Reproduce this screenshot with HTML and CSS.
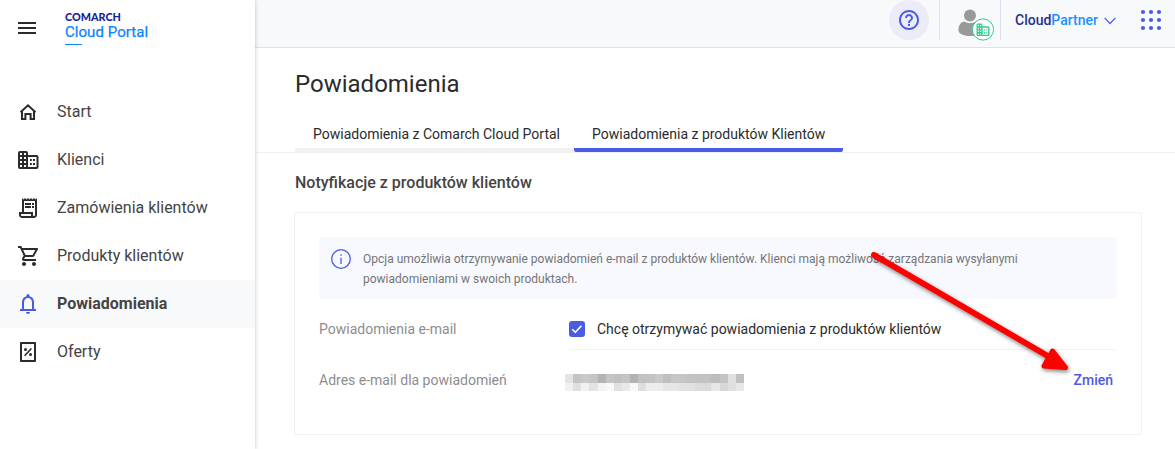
FILE: index.html
```
<!DOCTYPE html>
<html lang="pl">
<head>
    <meta charset="UTF-8">
    <meta name="viewport" content="width=device-width, initial-scale=1.0">
    <title>Comarch Cloud Portal - Powiadomienia</title>
    <link rel="stylesheet" href="styles.css">
</head>
<body>

<aside class="sidebar">
    <div class="brand">
        <svg class="icon" viewBox="0 0 24 24"><path d="M3 18h18v-2H3v2zm0-5h18v-2H3v2zm0-7v2h18V6H3z"/></svg>
        <div class="logo">
            <span class="logo-top">COMARCH</span>
            <span class="logo-name">Cloud Portal</span>
            <span class="logo-line"></span>
        </div>
    </div>

    <nav class="menu">
        <a class="menu-item">
            <svg class="icon stroke" viewBox="0 0 24 24"><path d="M4.500 12.300L12 5.300l7.500 7M6 11v8h3.400v-5h1.600M18 11v8h-3.400v-5H11"/></svg>
            <span>Start</span>
        </a>
        <a class="menu-item">
            <svg class="icon" viewBox="0 0 24 24"><path fill-rule="evenodd" d="M4 3h6a2 2 0 0 1 2 2v2h8.500a2 2 0 0 1 2 2v10a2 2 0 0 1-2 2H4a2 2 0 0 1-2-2V5a2 2 0 0 1 2-2zM4 5v2h2V5zm4 0v2h2V5zM4 9v2h2V9zm4 0v2h2V9zm-4 4v2h2v-2zm4 0v2h2v-2zm-4 4v2h2v-2zm4 0v2h2v-2zm4-8v10h8.500V9zM14 11h1.800v2H14zM17 11h2v2h-2zM14 15h1.800v2H14zM17 15h2v2h-2z"/></svg>
            <span>Klienci</span>
        </a>
        <a class="menu-item">
            <svg class="icon" viewBox="0 0 24 24"><path d="M19.500 3.500L18 2l-1.500 1.500L15 2l-1.500 1.500L12 2l-1.500 1.500L9 2 7.500 3.500 6 2v14H3v3c0 1.660 1.340 3 3 3h12c1.660 0 3-1.340 3-3V2l-1.500 1.500zM15 20H6c-.55 0-1-.45-1-1v-1h10v2zm4-1c0 .55-.45 1-1 1s-1-.45-1-1v-3H8V5h11v14z"/><path d="M9 7h6v2H9zM16 7h2v2h-2zM9 10h6v2H9zM16 10h2v2h-2z"/></svg>
            <span>Zamówienia klientów</span>
        </a>
        <a class="menu-item">
            <svg class="icon" viewBox="0 0 24 24"><path d="M15.550 13c.75 0 1.410-.41 1.750-1.030l3.580-6.490c.37-.66-.11-1.480-.87-1.480H5.210l-.94-2H1v2h2l3.600 7.590-1.350 2.440C4.520 15.370 5.480 17 7 17h12v-2H7l1.100-2h7.450zM6.160 6h12.150l-2.760 5H8.530L6.160 6zM7 18c-1.100 0-1.990.9-1.990 2S5.900 22 7 22s2-.9 2-2-.9-2-2-2zm10 0c-1.100 0-1.990.9-1.990 2s.89 2 1.990 2 2-.9 2-2-.9-2-2-2z" transform="translate(1 0)"/></svg>
            <span>Produkty klientów</span>
        </a>
        <a class="menu-item active">
            <svg class="icon" viewBox="0 0 24 24"><path d="M4 19v-2h2v-7c0-2.800 1.700-5.100 4.500-5.800V3.500a1.500 1.500 0 0 1 3 0v.7C16.300 4.900 18 7.200 18 10v7h2v2H4zm4-2h8v-7c0-2.200-1.800-4-4-4s-4 1.800-4 4v7zm2 3h4a2 2 0 0 1-4 0z"/></svg>
            <span>Powiadomienia</span>
        </a>
        <a class="menu-item">
            <svg class="icon" viewBox="0 0 24 24"><path fill-rule="evenodd" d="M5 2h14a1 1 0 0 1 1 1v18a1 1 0 0 1-1 1H5a1 1 0 0 1-1-1V3a1 1 0 0 1 1-1zm1 2v16h12V4z"/><path d="M8 15.200l6.800-7.200 1.200 1.100-6.800 7.200z"/><circle cx="9.500" cy="9.500" r="1.500"/><circle cx="14.500" cy="14.600" r="1.500"/></svg>
            <span>Oferty</span>
        </a>
    </nav>
</aside>

<div class="page">
    <header class="topbar">
        <div class="help">
            <svg class="icon" viewBox="0 0 24 24"><path d="M11 18h2v-2h-2v2zm1-16C6.480 2 2 6.480 2 12s4.480 10 10 10 10-4.480 10-10S17.520 2 12 2zm0 18c-4.410 0-8-3.590-8-8s3.590-8 8-8 8 3.590 8 8-3.590 8-8 8zm0-14c-2.210 0-4 1.790-4 4h2c0-1.100.9-2 2-2s2 .9 2 2c0 2-3 1.750-3 5h2c0-2.250 3-2.500 3-5 0-2.210-1.790-4-4-4z"/></svg>
        </div>
        <div class="user">
            <svg class="avatar" viewBox="0 0 40 42">
                <circle cx="16" cy="15.500" r="6"/>
                <path d="M4.500 30c0-5 2.500-8 6-8.500 3 2.200 8 2.200 11 0 3.500.5 6 3.500 6 8.500 0 3.500-4.500 6-11.500 6S4.500 33.500 4.500 30z"/>
                <circle class="badge" cx="29" cy="29.500" r="10.600"/>
                <path class="badge-icon" fill-rule="evenodd" d="M24 24h3.500a1 1 0 0 1 1 1v1.500h5a1.500 1.500 0 0 1 1.500 1.500v6.500a1 1 0 0 1-1 1H24a1 1 0 0 1-1-1V25a1 1 0 0 1 1-1zm.2 1.200v1.300h1v-1.300zm2.200 0v1.300h1v-1.300zm-2.200 2.700v1.300h1v-1.300zm2.200 0v1.300h1v-1.300zm-2.200 2.600v1.300h1v-1.300zm2.200 0v1.300h1v-1.300zm-2.200 2.600v1.300h1v-1.300zm2.200 0v1.300h1v-1.300zm2.300-5.300v6.500h5v-6.500zM30 29.200h1v1.200h-1zM32 29.200h1v1.200h-1zM30 31.900h1v1.200h-1zM32 31.900h1v1.200h-1z"/>
            </svg>
        </div>
        <div class="account">
            <span><span class="account-cloud">Cloud</span><span class="account-partner">Partner</span></span>
            <svg class="chevron" viewBox="0 0 12 8"><path d="M.6.900L6 6.500 11.400.9"/></svg>
        </div>
        <svg class="apps" viewBox="0 0 20 20">
            <circle cx="2" cy="2" r="2.100"/><circle cx="10" cy="2" r="2.100"/><circle cx="18" cy="2" r="2.100"/>
            <circle cx="2" cy="10" r="2.100"/><circle cx="10" cy="10" r="2.100"/><circle cx="18" cy="10" r="2.100"/>
            <circle cx="2" cy="18" r="2.100"/><circle cx="10" cy="18" r="2.100"/><circle cx="18" cy="18" r="2.100"/>
        </svg>
    </header>

    <h1>Powiadomienia</h1>

    <div class="tabs">
        <a class="tab">Powiadomienia z Comarch Cloud Portal</a>
        <a class="tab selected">Powiadomienia z produktów Klientów</a>
    </div>

    <main class="content">
        <h2>Notyfikacje z produktów klientów</h2>

        <section class="card">
            <div class="info">
                <svg class="info-icon" viewBox="0 0 20 20"><circle cx="10" cy="10" r="9.300"/><path d="M10 8.700v6.400M10 5.300v1.500"/></svg>
                <p>Opcja umożliwia otrzymywanie powiadomień e-mail z produktów klientów. Klienci mają możliwość zarządzania wysyłanymi<br>powiadomieniami w swoich produktach.</p>
            </div>

            <div class="row">
                <span class="label">Powiadomienia e-mail</span>
                <label class="value lined">
                    <svg class="checkbox" viewBox="0 0 16 16"><rect width="16" height="16" rx="3"/><path d="M3.300 8.300l3 3L12.400 4.800"/></svg>
                    Chcę otrzymywać powiadomienia z produktów klientów
                </label>
            </div>

            <div class="row">
                <span class="label">Adres e-mail dla powiadomień</span>
                <div class="value">
                    <!-- zamazany adres -->
                    <div class="blurred" id="blurred"></div>
                    <a class="change">Zmień</a>
                </div>
            </div>
        </section>
    </main>
</div>

<!-- strzałka wskazująca przycisk zmiany -->
<svg class="arrow" viewBox="0 0 210 130">
    <path d="M9 10L188 114" stroke-width="6"/>
    <path class="arrow-head" d="M187.500 106L200.500 122.500L179 121z"/>
</svg>

<script>
const shades = [
    [228, 196, 201, 196, 179, 197, 192, 197, 178, 194, 194, 201, 191, 199, 197, 194, 194, 194, 189, 195, 224, 192],
    [240, 223, 241, 227, 243, 248, 224, 233, 248, 222, 237, 236, 230, 230, 226, 225, 220, 218, 231, 216, 222, 231]
];
const blurred = document.getElementById('blurred');

shades.forEach(line => {
    line.forEach(v => {
        const cell = document.createElement('i');
        cell.style.backgroundColor = `rgb(${v}, ${v}, ${v})`;
        blurred.appendChild(cell);
    });
});
</script>

</body>
</html>
```
FILE: styles.css
```
* {
    box-sizing: border-box;
}

body {
    margin: 0;
    height: 449px;
    display: flex;
    overflow: hidden;
    font-family: Roboto, 'Liberation Sans', sans-serif;
    font-size: 14px;
    background-color: #fff;
    color: #2b2b2b;
}

h1, h2, p {
    margin: 0;
}

.icon {
    width: 24px;
    height: 24px;
    flex: none;
    fill: #2b2b2b;
}

.icon.stroke {
    fill: none;
    stroke: #2b2b2b;
    stroke-width: 2;
}

/* panel boczny */
.sidebar {
    width: 255px;
    flex: none;
    z-index: 1;
    background-color: #fff;
    box-shadow: 0 0 4px rgba(0, 0, 0, 0.25);
}

.brand {
    height: 88px;
    padding: 11px 0 0 15px;
    display: flex;
    gap: 26px;
}

.brand .icon {
    margin-top: 5px;
}

.logo {
    display: flex;
    flex-direction: column;
}

.logo-top {
    font-family: Lato, sans-serif;
    font-size: 10.8px;
    font-weight: 900;
    line-height: 12px;
    color: #1a2791;
}

.logo-name {
    font-size: 15px;
    line-height: 18px;
    letter-spacing: 0.05px;
    color: #0a84ff;
    -webkit-text-stroke: 0.25px #0a84ff;
}

.logo-line {
    width: 17px;
    height: 1px;
    margin-top: 3px;
    background-color: #0a84ff;
}

.menu-item {
    height: 48px;
    padding-left: 16px;
    display: flex;
    align-items: center;
    gap: 17px;
    font-size: 16px;
    color: #444;
}

.menu-item span {
    padding-bottom: 2px;
}

.menu-item.active {
    background-color: #f8f9fb;
    font-weight: 700;
}

.menu-item.active .icon {
    fill: #4a5ce4;
}

/* górny pasek */
.page {
    flex: 1;
}

.topbar {
    height: 48px;
    padding-right: 14px;
    display: flex;
    justify-content: flex-end;
    background-color: #f8f9fb;
    border-bottom: 1px solid #e0e0f4;
}

.help {
    width: 40px;
    height: 40px;
    margin-right: 10px;
    display: flex;
    align-items: center;
    justify-content: center;
    border-radius: 50%;
    background-color: #ecebf8;
}

.help .icon {
    fill: #4a5ce4;
}

.user {
    width: 62px;
    height: 40px;
    padding-left: 14px;
    border-left: 1px solid #e0e0f4;
    border-right: 1px solid #e0e0f4;
}

.avatar {
    width: 40px;
    height: 42px;
    fill: #999;
}

.avatar .badge {
    fill: #fff;
    stroke: #36c98e;
    stroke-width: 1;
}

.avatar .badge-icon {
    fill: #36c98e;
    transform: scale(1.08);
    transform-origin: 29px 29.500px;
}

.account {
    width: 140px;
    height: 40px;
    padding-left: 14px;
    display: flex;
    align-items: center;
    gap: 6px;
    font-weight: 500;
}

.account-cloud {
    color: #27308f;
}

.account-partner {
    color: #1e90ff;
}

.chevron {
    width: 12px;
    height: 8px;
    margin-top: 1px;
    fill: none;
    stroke: #4a5ce4;
    stroke-width: 1.3;
}

.apps {
    width: 20px;
    height: 20px;
    margin-top: 10px;
    overflow: visible;
    fill: #4a5ce4;
}

/* zakładki */
h1 {
    height: 72px;
    padding: 20px 0 0 40px;
    font-size: 24px;
    font-weight: 400;
    line-height: 32px;
}

.tabs {
    height: 33px;
    padding-left: 40px;
    display: flex;
    border-bottom: 1px solid #f2f2f2;
}

.tab {
    width: 279px;
    height: 32px;
    padding-left: 18px;
    line-height: 28px;
    border-bottom: 4px solid #f2f2f2;
    white-space: nowrap;
}

.tab.selected {
    width: 269px;
    border-radius: 2px;
    border-bottom: none;
    background: linear-gradient(#4a5ce4, #4a5ce4) bottom / 100% 4px no-repeat;
}

.content {
    padding: 20px 33px 0 39px;
}

h2 {
    padding-left: 1px;
    font-size: 16px;
    font-weight: 500;
    line-height: 20px;
    color: #444;
}

.card {
    height: 223px;
    margin-top: 19px;
    padding: 24px;
    border: 1px solid #f2f2f2;
    border-radius: 3px;
}

.info {
    height: 62px;
    padding: 12px;
    display: flex;
    gap: 12px;
    border-radius: 3px;
    background-color: #f8f9ff;
}

.info p {
    font-size: 12px;
    line-height: 20px;
    color: #757575;
    white-space: nowrap;
}

.info-icon {
    width: 20px;
    height: 20px;
    flex: none;
    fill: none;
    stroke: #4a5ce4;
    stroke-width: 1.3;
}

.row {
    height: 51px;
    display: flex;
}

.label {
    width: 250px;
    padding-top: 20px;
    line-height: 20px;
    color: #8d8d8d;
}

.value {
    flex: 1;
    padding-top: 9px;
    display: flex;
    align-items: center;
}

.value.lined {
    padding-top: 10px;
    gap: 12px;
    border-bottom: 1px solid #f2f2f2;
}

.checkbox {
    width: 16px;
    height: 16px;
    fill: #4a5ce4;
}

.checkbox path {
    fill: none;
    stroke: #fff;
    stroke-width: 1.6;
}

.blurred {
    width: 179px;
    height: 17px;
    margin: 5px 0 0 -4px;
    display: grid;
    grid-template-columns: repeat(22, 1fr);
    grid-template-rows: 9px 8px;
}

.change {
    margin-left: auto;
    padding-right: 4px;
    font-weight: 500;
    color: #4a5ce4;
}

.arrow {
    position: absolute;
    left: 865px;
    top: 245px;
    z-index: 2;
    width: 210px;
    height: 130px;
    fill: none;
    stroke: #f00;
    stroke-linecap: round;
    stroke-linejoin: round;
    filter: drop-shadow(1px 2px 2px rgba(0, 0, 0, 0.5));
}

.arrow-head {
    fill: #f00;
    stroke-width: 5;
}
```
